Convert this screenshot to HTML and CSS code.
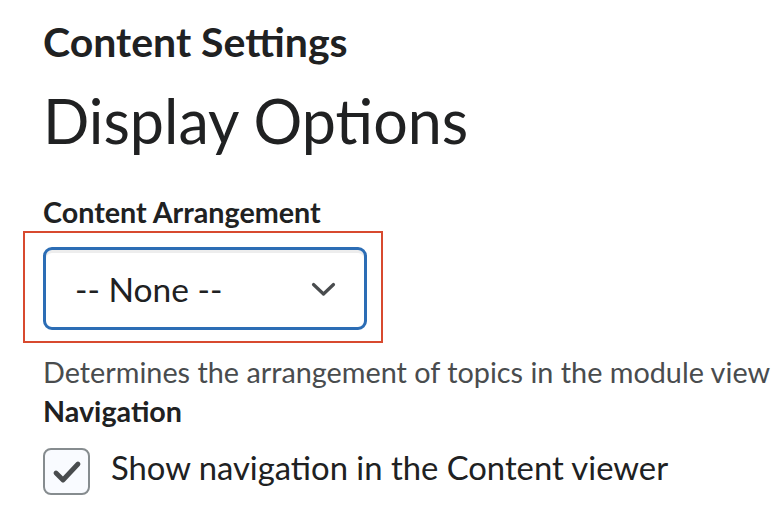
FILE: index.html
```html
<!DOCTYPE html>
<html>
<head>
  <title>Display Options</title>
  <link rel="stylesheet" href="styles.css">
</head>
<body>
  <div class="page">
    <div class="crumb">Content Settings</div>
    <h1>Display Options</h1>

    <label class="field-label" for="arrangement">Content Arrangement</label>
    <div class="highlight">
      <div class="select-box" id="arrangement">
        <span class="select-value">-- None --</span>
        <svg class="chevron" width="25" height="15" viewBox="0 0 25 15">
          <path d="M2.5 2.5 L12.5 12 L22.5 2.5" fill="none" stroke="#494c4e" stroke-width="3.2" stroke-linecap="round" stroke-linejoin="round"/>
        </svg>
      </div>
    </div>
    <p class="help">Determines the arrangement of topics in the module view</p>

    <div class="field-label nav-label">Navigation</div>
    <label class="check-row">
      <span class="checkbox">
        <svg width="32" height="26" viewBox="0 0 32 26">
          <path d="M5 14 L12 21 L27 5" fill="none" stroke="#494c4e" stroke-width="4.8" stroke-linecap="round" stroke-linejoin="round"/>
        </svg>
      </span>
      <span class="check-text">Show navigation in the Content viewer</span>
    </label>
  </div>
</body>
</html>
```

FILE: styles.css
```css
body {
  margin: 0;
  padding: 0;
  background-color: #ffffff;
  font-family: 'Lato', 'Noto Sans', sans-serif;
  color: #202122;
}

.page {
  padding: 18px 0 0 43px;
}

.crumb {
  font-size: 41px;
  font-weight: bold;
  line-height: 48px;
}

h1 {
  margin: 18px 0 0 0;
  font-size: 61px;
  font-weight: normal;
  line-height: 74px;
}

.field-label {
  display: block;
  margin-top: 37px;
  font-size: 28.7px;
  font-weight: bold;
  line-height: 34px;
}

.highlight {
  display: inline-block;
  margin: 2px 0 0 -20px;
  padding: 14px 14px 11px 18px;
  border: 2px solid #d84a2f;
}

.select-box {
  display: flex;
  align-items: center;
  justify-content: space-between;
  box-sizing: border-box;
  width: 324px;
  height: 83px;
  padding: 0 28px 0 29px;
  border: 3px solid #2c6db5;
  border-radius: 9px;
  box-shadow: inset 0 3px 0 #ededed;
}

.select-value {
  font-size: 33.5px;
  color: #202122;
}

.chevron {
  margin-top: 1px;
}

.help {
  margin: 11px 0 0 0;
  font-size: 28.8px;
  line-height: 36px;
  color: #494c4e;
}

.nav-label {
  margin-top: 4px;
}

.check-row {
  display: flex;
  align-items: center;
  margin-top: 20px;
}

.checkbox {
  display: flex;
  align-items: center;
  justify-content: center;
  box-sizing: border-box;
  width: 47px;
  height: 47px;
  border: 2px solid #868c8f;
  border-radius: 8px;
  background-color: #f9fbff;
}

.check-text {
  margin: 0 0 8px 21px;
  font-size: 32.8px;
  color: #202122;
}
```
